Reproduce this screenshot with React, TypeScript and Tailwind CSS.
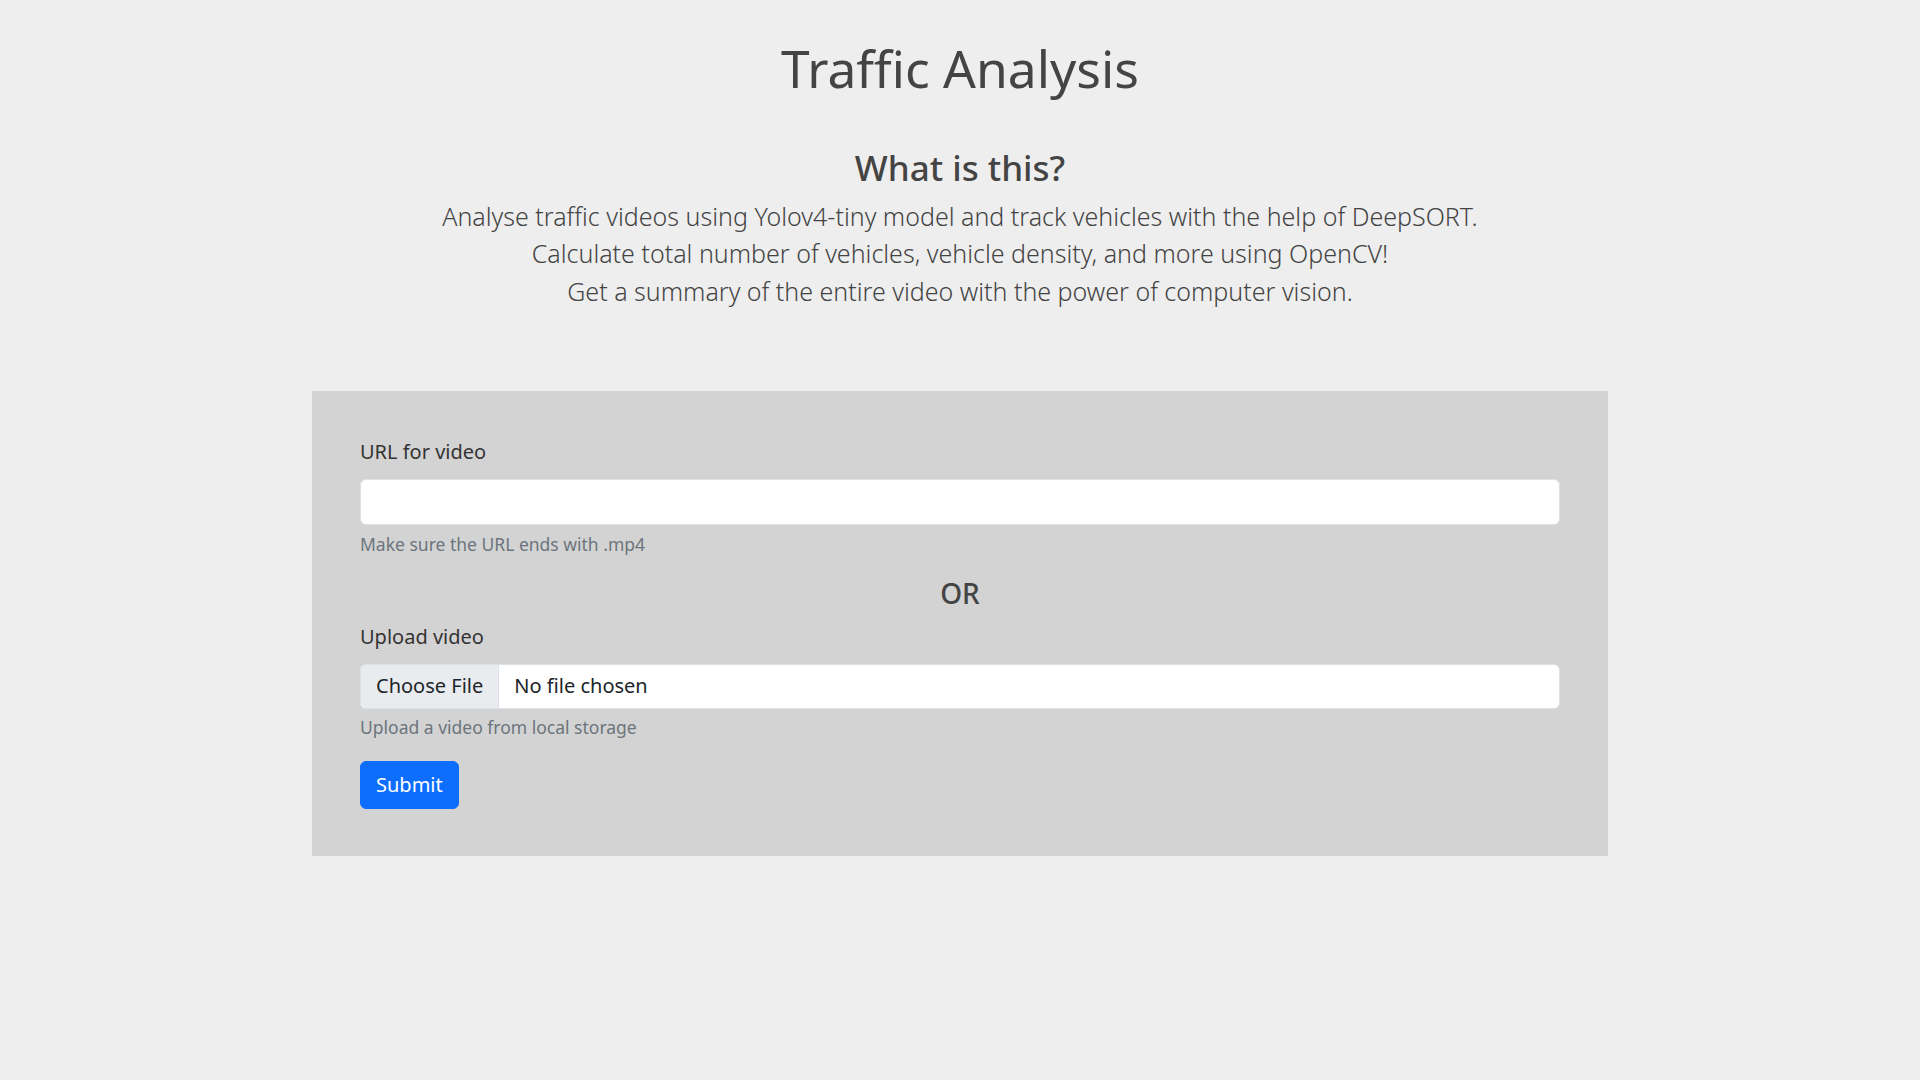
export default function App() {
  return (
    <div className="min-h-screen bg-[#eeeeee] font-['Noto_Sans',sans-serif] text-[#444444]">
      <div className="mx-auto w-[1320px] px-[12px] pt-[38px] pb-[80px]">
        <h1 className="text-center text-[51.5px] leading-[1.2] font-normal">Traffic Analysis</h1>
        <h2 className="mt-[47px] text-center text-[35px] leading-[1.2] font-medium">What is this?</h2>
        <p className="mt-[9px] text-center text-[25px] leading-[37.5px] font-light">
          Analyse traffic videos using Yolov4-tiny model and track vehicles with the help of DeepSORT.
          <br />
          Calculate total number of vehicles, vehicle density, and more using OpenCV!
          <br />
          Get a summary of the entire video with the power of computer vision.
        </p>

        <form
          className="mt-[81px] flex flex-col bg-[#d3d3d3] px-[48px] pt-[46px] pb-[47px]"
          onSubmit={(e) => e.preventDefault()}
        >
          <label className="text-[20px] leading-[30px] text-[#333333]">URL for video</label>
          <input
            type="text"
            className="mt-[12px] h-[46px] w-full rounded-[6px] border border-[#dee2e6] bg-white px-[16px] text-[20px] text-[#212529] outline-none"
          />
          <div className="mt-[6px] text-[17.5px] leading-[26px] text-[#6c757d]">
            Make sure the URL ends with .mp4
          </div>

          <h4 className="mt-[20px] text-center text-[28px] leading-[1.2] font-medium">OR</h4>

          <label className="mt-[11px] text-[20px] leading-[30px] text-[#333333]">Upload video</label>
          <div className="mt-[12px] flex h-[45px] w-full items-center overflow-hidden rounded-[6px] border border-[#dee2e6] bg-white text-[20px] text-[#212529]">
            <span className="flex h-full items-center border-r border-[#dee2e6] bg-[#e9ecef] px-[15px]">
              Choose File
            </span>
            <span className="pl-[15px]">No file chosen</span>
          </div>
          <div className="mt-[5px] text-[17.5px] leading-[26px] text-[#6c757d]">
            Upload a video from local storage
          </div>

          <div className="mt-[21px]">
            <button
              type="submit"
              className="h-[48px] rounded-[6px] border border-[#0d6efd] bg-[#0d6efd] px-[15px] text-[20px] leading-[30px] text-white"
            >
              Submit
            </button>
          </div>
        </form>
      </div>
    </div>
  );
}
